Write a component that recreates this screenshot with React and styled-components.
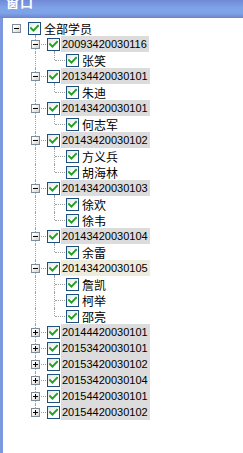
import styled, { createGlobalStyle, css } from "styled-components";

const GlobalStyle = createGlobalStyle`
  html, body {
    margin: 0;
    padding: 0;
    background: #ffffff;
  }
  body {
    font-family: "Liberation Sans", "Noto Sans CJK SC", sans-serif;
  }
`;

const studentTree = {
  label: "全部学员",
  open: true,
  children: [
    { label: "20093420030116", open: true, children: [{ label: "张笑" }] },
    { label: "20134420030101", open: true, children: [{ label: "朱迪" }] },
    { label: "20143420030101", open: true, children: [{ label: "何志军" }] },
    {
      label: "20143420030102",
      open: true,
      children: [{ label: "方义兵" }, { label: "胡海林" }],
    },
    {
      label: "20143420030103",
      open: true,
      children: [{ label: "徐欢" }, { label: "徐韦" }],
    },
    { label: "20143420030104", open: true, children: [{ label: "余雷" }] },
    {
      label: "20143420030105",
      open: true,
      hover: true,
      children: [{ label: "詹凯" }, { label: "柯举" }, { label: "邵亮" }],
    },
    { label: "20144420030101", children: [{ label: "-" }] },
    { label: "20153420030101", children: [{ label: "-" }] },
    { label: "20153420030102", children: [{ label: "-" }] },
    { label: "20153420030104", children: [{ label: "-" }] },
    { label: "20154420030101", children: [{ label: "-" }] },
    { label: "20154420030102", children: [{ label: "-" }] },
  ],
};

// walk the tree into flat rows, remembering which ancestors still have siblings below
function flatten(node, level, isLast, pipes, out) {
  out.push({ node, level, isLast, pipes });
  if (node.open && node.children) {
    node.children.forEach((child, i) => {
      const last = i === node.children.length - 1;
      const nextPipes = level === 0 ? [false] : [...pipes, !isLast];
      flatten(child, level + 1, last, nextPipes, out);
    });
  }
  return out;
}

function CheckMark() {
  return (
    <svg width="9" height="9" viewBox="0 0 9 9">
      <path
        d="M1 4.2 L3.4 6.6 L8 1.8"
        fill="none"
        stroke="#21a121"
        strokeWidth="2"
        strokeLinecap="square"
      />
    </svg>
  );
}

function Sign({ open }) {
  return (
    <svg width="7" height="7" viewBox="0 0 7 7" shapeRendering="crispEdges">
      <rect x="1" y="3" width="5" height="1" fill="#000" />
      {!open && <rect x="3" y="1" width="1" height="5" fill="#000" />}
    </svg>
  );
}

function TreeRow({ row }) {
  const { node, level, isLast, pipes } = row;
  const hasKids = !!node.children;
  const isCode = /^\d+$/.test(node.label);
  let line = "none";
  if (level > 0) line = isLast ? "elbow" : "tee";
  return (
    <Row>
      {pipes.map((p, i) => (
        <Indent key={i} $pipe={p} />
      ))}
      <Switcher $line={line}>
        {hasKids && (
          <Expander>
            <Sign open={node.open} />
          </Expander>
        )}
      </Switcher>
      <CheckBox $connect={node.open && hasKids}>
        <CheckMark />
      </CheckBox>
      <Label $code={isCode} $tone={isCode ? (node.hover ? "hover" : "group") : "plain"}>
        {node.label}
      </Label>
    </Row>
  );
}

export default function App() {
  const rows = flatten(studentTree, 0, true, [], []);
  return (
    <>
      <GlobalStyle />
      <Window>
        <TitleBar>
          <Title>窗口</Title>
        </TitleBar>
        <Body>
          <Edge />
          <TreePanel>
            {rows.map((row, i) => (
              <TreeRow key={i} row={row} />
            ))}
          </TreePanel>
        </Body>
      </Window>
    </>
  );
}

const Window = styled.div`
  width: 243px;
  height: 453px;
  display: flex;
  flex-direction: column;
  overflow: hidden;
  background: #ffffff;
`;

const TitleBar = styled.div`
  height: 18px;
  flex: none;
  overflow: hidden;
  background: linear-gradient(
    180deg,
    #7089d8 0px,
    #7896de 4px,
    #7ea4e8 8px,
    #7ea3e8 13px,
    #7590da 16px,
    #6a84cc 18px
  );
`;

const Title = styled.div`
  margin: -6px 0 0 6px;
  font-family: "Noto Sans CJK SC", sans-serif;
  font-size: 13px;
  font-weight: 700;
  line-height: 16px;
  color: #ffffff;
  letter-spacing: 1px;
`;

const Body = styled.div`
  flex: 1;
  display: flex;
`;

const Edge = styled.div`
  width: 3px;
  flex: none;
  background: #7b98e0;
`;

const TreePanel = styled.div`
  flex: 1;
  padding: 2px 0 0 4px;
  display: flex;
  flex-direction: column;
`;

const Row = styled.div`
  height: 16px;
  display: flex;
  align-items: center;
`;

const dotted = "1px dotted #a0a0a0";

const Indent = styled.div`
  width: 19px;
  height: 16px;
  flex: none;
  position: relative;
  ${(p) =>
    p.$pipe &&
    css`
      &::before {
        content: "";
        position: absolute;
        left: 9px;
        top: 0;
        bottom: 0;
        border-left: ${dotted};
      }
    `}
`;

const Switcher = styled.div`
  width: 21px;
  height: 16px;
  flex: none;
  position: relative;
  display: flex;
  align-items: center;
  ${(p) =>
    p.$line !== "none" &&
    css`
      &::before {
        content: "";
        position: absolute;
        left: 9px;
        top: 0;
        height: ${p.$line === "elbow" ? "8px" : "16px"};
        border-left: ${dotted};
      }
      &::after {
        content: "";
        position: absolute;
        left: 10px;
        right: 1px;
        top: 8px;
        border-top: ${dotted};
      }
    `}
`;

const Expander = styled.span`
  position: relative;
  z-index: 1;
  box-sizing: border-box;
  width: 9px;
  height: 9px;
  margin-left: 5px;
  border: 1px solid #7f8c9b;
  background: linear-gradient(135deg, #ffffff 20%, #d4d4cc 100%);
  display: flex;
  svg {
    display: block;
  }
`;

const CheckBox = styled.span`
  position: relative;
  box-sizing: border-box;
  width: 13px;
  height: 13px;
  flex: none;
  border: 1px solid #1c5180;
  background: linear-gradient(135deg, #e4e4de 0%, #ffffff 60%);
  display: flex;
  align-items: center;
  justify-content: center;
  ${(p) =>
    p.$connect &&
    css`
      &::after {
        content: "";
        position: absolute;
        left: 6px;
        top: 12px;
        height: 3px;
        border-left: ${dotted};
      }
    `}
`;

const tones = {
  plain: "transparent",
  group: "#dcdcdc",
  hover: "#eeecdd",
};

const Label = styled.span`
  height: 16px;
  margin-left: 1px;
  padding: 0 2px 0 ${(p) => (p.$code ? "1px" : "2px")};
  display: flex;
  align-items: center;
  white-space: nowrap;
  color: #000000;
  font-family: ${(p) =>
    p.$code ? '"Liberation Sans", sans-serif' : '"Noto Sans CJK SC", sans-serif'};
  font-size: ${(p) => (p.$code ? "11px" : "12px")};
  background: ${(p) => tones[p.$tone]};
`;
